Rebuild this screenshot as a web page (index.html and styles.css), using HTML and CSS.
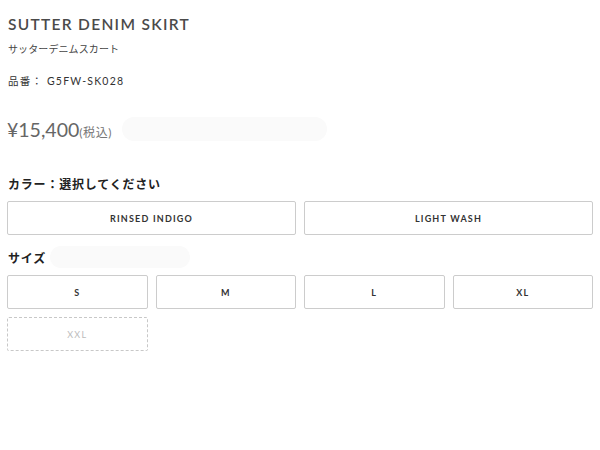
FILE: index.html
```html
<!DOCTYPE html>
<html lang="ja">
<head>
    <meta charset="UTF-8">
    <meta name="viewport" content="width=device-width, initial-scale=1.0">
    <title>SUTTER DENIM SKIRT</title>
    <link rel="stylesheet" href="styles.css">
</head>
<body>
<div class="product">
    <h1 class="product-name">SUTTER DENIM SKIRT</h1>
    <p class="product-kana">サッターデニムスカート</p>
    <p class="product-code">品番： G5FW-SK028</p>

    <div class="price-row">
        <span class="price">¥15,400</span><span class="tax">(税込)</span>
        <span class="placeholder placeholder-price"></span>
    </div>

    <!-- Color -->
    <div class="option">
        <div class="option-label">カラー：選択してください</div>
        <div class="option-grid cols-2">
            <button class="opt-btn">RINSED INDIGO</button>
            <button class="opt-btn">LIGHT WASH</button>
        </div>
    </div>

    <!-- Size -->
    <div class="option">
        <div class="option-label size-label">サイズ<span class="placeholder placeholder-size"></span></div>
        <div class="option-grid cols-4">
            <button class="opt-btn">S</button>
            <button class="opt-btn">M</button>
            <button class="opt-btn">L</button>
            <button class="opt-btn">XL</button>
            <button class="opt-btn sold-out">XXL</button>
        </div>
    </div>
</div>
</body>
</html>
```

FILE: styles.css
```css
body {
    margin: 0;
    padding: 7px;
    font-family: Lato, "Noto Sans CJK JP", sans-serif;
    color: #333;
    background: #fff;
}
.product-name {
    margin: 5px 0 0 1px;
    font-size: 15.5px;
    font-weight: 600;
    letter-spacing: 1.3px;
    color: #4a4a4a;
    line-height: 24px;
}
.product-kana {
    margin: 5px 0 0 1px;
    font-size: 10px;
    color: #444;
    letter-spacing: 0.1px;
    line-height: 16px;
}
.product-code {
    margin: 16px 0 0 1px;
    font-size: 10.5px;
    color: #333;
    letter-spacing: 1.2px;
    line-height: 16px;
}
.price-row {
    display: flex;
    align-items: center;
    margin-top: 27px;
    height: 26px;
}
.price {
    font-size: 19.5px;
    color: #666;
    letter-spacing: 0;
}
.tax {
    font-size: 12px;
    color: #777;
    margin-top: 5px;
    letter-spacing: 0.6px;
}
.placeholder {
    display: inline-block;
    background: #fafafa;
    border-radius: 12px;
}
.placeholder-price {
    width: 205px;
    height: 24px;
    margin-left: 10px;
}
.option {
    margin-top: 30px;
}
.option + .option {
    margin-top: 11px;
}
.option-label {
    display: flex;
    align-items: center;
    font-size: 12px;
    font-weight: 700;
    letter-spacing: 0.8px;
    color: #222;
    height: 22px;
    margin: 0 0 7px 1px;
}
.placeholder-size {
    width: 140px;
    height: 22px;
    margin-left: 4px;
}
.option-grid {
    display: grid;
    gap: 8px;
}
.cols-2 {
    grid-template-columns: 1fr 1fr;
}
.cols-4 {
    grid-template-columns: repeat(4, 1fr);
}
.opt-btn {
    height: 34px;
    background: #fff;
    border: 1px solid #ccc;
    border-radius: 2px;
    font-family: Lato, sans-serif;
    font-size: 9px;
    font-weight: 700;
    letter-spacing: 1.2px;
    color: #333;
    cursor: pointer;
}
.sold-out {
    border: 1px dashed #c8c8c8;
    color: #bbb;
    font-weight: 400;
}
```
